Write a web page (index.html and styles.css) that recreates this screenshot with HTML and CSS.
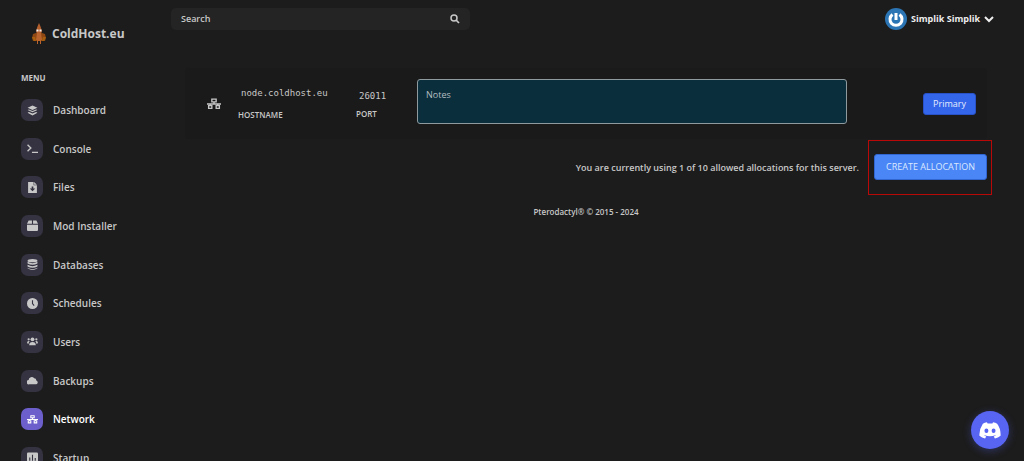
FILE: index.html
```html
<!DOCTYPE html>
<html lang="en">
<head>
<meta charset="utf-8">
<meta name="viewport" content="width=device-width, initial-scale=1">
<title>ColdHost.eu - Network</title>
<link rel="stylesheet" href="styles.css">
</head>
<body>
<svg class="sprite" aria-hidden="true">
  <symbol id="network" viewBox="0 0 26 22">
    <path d="M9 2h8v5H9zM3 14h6v5H3zM17 14h6v5h-6zM13 7v4M0 11h26M6 11v3M20 11v3" fill="none" stroke="currentColor" stroke-width="2.500"/>
  </symbol>
</svg>
<div class="app">
  <aside class="sidebar">
    <a class="brand" href="#">
      <svg class="mascot" viewBox="0 0 14 22" aria-hidden="true">
        <path d="M7 0 8.500 3.500 10 8 9 11H5L4 8l1.500-4.500z" fill="#b5602c"/>
        <path d="M4 10h6l3 1 1 4-1 3H1l-1-3 1-4z" fill="#8f4813"/>
        <path d="M5 10h4l1 7H9v4H8v-3H6v3H5v-4H4z" fill="#b9642f"/>
        <path d="M4.500 6.500h2v2h-2zM7.500 6.500h2v2h-2z" fill="#eee"/>
        <path d="M0 14l2 4h2l-1-4zM14 14l-2 4h-2l1-4z" fill="#a8600f"/>
      </svg>
      <span>ColdHost.eu</span>
    </a>
    <h2 class="menu-title">MENU</h2>
    <nav aria-label="Server">
      <ul class="menu">
        <li><a href="#"><span class="tile"><svg viewBox="0 0 20 20"><path d="M10 1l9 4-9 4-9-4z"/><path d="M1 9l2.500-1L10 11l6.500-3L19 9l-9 4z"/><path d="M1 14l2.500-1.500L10 15.500l6.500-3L19 14l-9 5z"/></svg></span>Dashboard</a></li>
        <li><a href="#"><span class="tile"><svg viewBox="0 0 20 20"><path d="M1 3l6 6-6 6M9 17h11" fill="none" stroke="currentColor" stroke-width="2.500"/></svg></span>Console</a></li>
        <li><a href="#"><span class="tile"><svg viewBox="0 0 20 20"><path fill-rule="evenodd" d="M2 0h10v6h6v14H2zM8.500 8v4H5l5 5 5-5h-3.500V8z"/><path d="M13 0l5 5h-5z"/></svg></span>Files</a></li>
        <li><a href="#"><span class="tile"><svg viewBox="0 0 20 20"><path d="M3 1h6v6H0zM11 1h6l3 6h-9zM0 8.500h20V18q0 2-2 2H2q-2 0-2-2z"/></svg></span>Mod Installer</a></li>
        <li><a href="#"><span class="tile"><svg viewBox="0 0 20 20"><ellipse cx="10" cy="3" rx="9" ry="3"/><path d="M1 5q9 5 18 0v3q-9 5-18 0zM1 10.500q9 5 18 0v3q-9 5-18 0zM1 16q9 5 18 0v1q-9 6-18 0z"/></svg></span>Databases</a></li>
        <li><a href="#"><span class="tile"><svg viewBox="0 0 20 20"><circle cx="10" cy="10" r="10"/><path class="cut" d="M10 4v6l3 4" fill="none" stroke-width="2"/></svg></span>Schedules</a></li>
        <li><a href="#"><span class="tile"><svg viewBox="0 0 20 20"><circle cx="10" cy="6" r="3.500"/><circle cx="3" cy="6" r="2"/><circle cx="17" cy="6" r="2"/><path d="M4 17q0-6 6-6t6 6zM0 13q0-4 3-4 2 0 2 1-2 1-2 4zM20 13q0-4-3-4-2 0-2 1 2 1 2 4z"/></svg></span>Users</a></li>
        <li><a href="#"><span class="tile"><svg viewBox="0 0 20 20"><path d="M4 17a4 4 0 0 1-1-8 5.500 5.500 0 0 1 10-3 4 4 0 0 1 4 4 3.600 3.600 0 0 1-1 7z"/></svg></span>Backups</a></li>
        <li><a class="active" href="#" aria-current="page"><span class="tile"><svg><use href="#network"/></svg></span>Network</a></li>
        <li><a href="#"><span class="tile"><svg viewBox="0 0 20 20"><path fill-rule="evenodd" d="M2 1h16q2 0 2 2v14q0 2-2 2H2q-2 0-2-2V3q0-2 2-2zM4 10v6h2v-6zM9 5v11h2V5zM14 11v5h2v-5z"/></svg></span>Startup</a></li>
      </ul>
    </nav>
  </aside>
  <div class="page">
    <header class="topbar">
      <form class="search" role="search">
        <input type="search" placeholder="Search" aria-label="Search">
        <button type="button" aria-label="Submit search"><svg viewBox="0 0 20 20"><circle cx="8" cy="8" r="6" fill="none" stroke="currentColor" stroke-width="3"/><path d="M12 12l6 6" stroke="currentColor" stroke-width="3.500"/></svg></button>
      </form>
      <button class="account" type="button">
        <svg class="avatar" viewBox="0 0 22 22" aria-hidden="true"><circle cx="11" cy="11" r="11" fill="#2c75b5"/><path d="M7.500 6.500a6 6 0 1 0 7 0" fill="none" stroke="#fff" stroke-width="3"/><path d="M11 5v7" stroke="#fff" stroke-width="3"/></svg>
        <span>Simplik Simplik</span>
        <svg class="chevron" viewBox="0 0 10 10" aria-hidden="true"><path d="M1 3l4 4 4-4" fill="none" stroke="currentColor" stroke-width="2"/></svg>
      </button>
    </header>
    <main class="content">
      <section class="allocation">
        <svg class="row-icon" aria-hidden="true"><use href="#network"/></svg>
        <div class="field host"><code>node.coldhost.eu</code><span>HOSTNAME</span></div>
        <div class="field port"><code>26011</code><span>PORT</span></div>
        <textarea class="notes" placeholder="Notes" aria-label="Notes"></textarea>
        <div class="actions"><button class="primary" type="button">Primary</button></div>
      </section>
      <div class="create-row">
        <p>You are currently using 1 of 10 allowed allocations for this server.</p>
        <div class="highlight"><button class="create" type="button">CREATE ALLOCATION</button></div>
      </div>
      <footer>Pterodactyl® © 2015 - 2024</footer>
    </main>
  </div>
</div>
<button class="discord" type="button" aria-label="Open Discord chat">
  <svg viewBox="0 0 24 19" aria-hidden="true"><path fill="#fff" fill-rule="evenodd" d="M20 2Q18 .8 15.400.3L14.700 1.800Q12 1.400 9.300 1.800L8.600.3Q6 .8 4 2-.3 8.500.2 15.300 3 17.700 6.500 18.500L7.800 16.300 5.500 15.200 6 14.800Q12 17.300 18 14.800l.5.4-2.300 1.100 1.300 2.200Q21 17.700 23.800 15.300 24.300 8 20 2zM8 12.300a2.200 2.500 0 1 1 0-5 2.200 2.500 0 0 1 0 5zM16 12.300a2.200 2.500 0 1 1 0-5 2.200 2.500 0 0 1 0 5z"/></svg>
</button>
</body>
</html>
```

FILE: styles.css
```css
* { box-sizing: border-box; }

body {
  margin: 0;
  background: #1c1c1c;
  color: #c8c8c8;
  font: 600 9px/14px "Open Sans", "Noto Sans", sans-serif;
}

button, input, textarea { font: inherit; color: inherit; }
button { cursor: pointer; border: 0; }
a { color: inherit; text-decoration: none; }
svg { display: block; fill: currentColor; }
.sprite { position: absolute; width: 0; height: 0; }

.app {
  display: grid;
  grid-template-columns: 171px 1fr;
  height: 100vh;
  overflow: hidden;
}

.sidebar { padding: 22px 0 0 21px; }

.brand {
  display: flex;
  align-items: center;
  gap: 6px;
  padding-left: 11px;
  font-size: 12px;
  font-weight: 700;
  line-height: 24px;
}
.mascot { width: 14px; height: 22px; }

.menu-title {
  margin: 25px 0 14px;
  font-size: 8px;
  font-weight: 700;
  line-height: 14px;
}

.menu {
  display: flex;
  flex-direction: column;
  justify-content: space-between;
  min-height: 370px;
  margin: 0;
  padding: 0;
  font-size: 10px;
  list-style: none;
}
.menu a { display: flex; align-items: center; gap: 10px; }
.menu .active { color: #fff; }
.tile {
  display: grid;
  place-items: center;
  width: 22px;
  height: 22px;
  border-radius: 7px;
  background: #353241;
}
.active .tile { background: #6c5fcb; }
.tile svg { width: 11px; height: 11px; }
.cut { stroke: #353241; }

.topbar {
  display: flex;
  justify-content: space-between;
  align-items: center;
  padding: 8px 30px 0 0;
}
.search {
  display: flex;
  align-items: center;
  width: 299px;
  height: 22px;
  padding: 0 10px;
  border-radius: 5px;
  background: #242424;
}
.search input {
  flex: 1;
  min-width: 0;
  padding: 0;
  border: 0;
  outline: 0;
  background: none;
}
.search input::placeholder { color: #c8c8c8; opacity: 1; }
.search button { padding: 0; background: none; }
.search svg { width: 10px; height: 10px; }

.account {
  display: flex;
  align-items: center;
  gap: 4px;
  padding: 0;
  background: none;
  color: #eee;
  font-weight: 700;
}
.avatar { width: 22px; height: 22px; }
.chevron { width: 10px; height: 10px; }

.content { padding: 38px 37px 0 14px; }

.allocation {
  display: flex;
  align-items: center;
  min-height: 71px;
  padding: 0 11px 0 22px;
  border-radius: 4px;
  background: #1a1a1a;
}
.row-icon { width: 14px; height: 12px; }
.field { display: flex; flex-direction: column; font-size: 8px; }
.field code {
  padding-left: 3px;
  font: 9px/14px "DejaVu Sans Mono", monospace;
}
.host { gap: 8px; width: 118px; margin-left: 17px; }
.port { gap: 4px; width: 61px; padding-top: 3px; }
.notes {
  flex: 1;
  min-width: 0;
  height: 45px;
  margin-bottom: 5px;
  padding: 8px;
  border: 1px solid #8f9a9e;
  border-radius: 3px;
  outline: 0;
  resize: none;
  background: #0b2e3c;
  font-weight: 400;
}
.notes::placeholder { color: #b5bec2; opacity: 1; }
.actions { display: flex; justify-content: flex-end; width: 129px; }
.primary {
  padding: 3px 9px;
  border: 1px solid #2952c8;
  border-radius: 3px;
  background: #3366ea;
  color: #e6edff;
  font-weight: 400;
}

.create-row {
  display: flex;
  justify-content: flex-end;
  align-items: center;
  gap: 9px;
  margin: 1px -5px 0 0;
}
.create-row p { margin: 0; }
.highlight { padding: 13px 4px 14px 5px; border: 1px solid #b90808; }
.create {
  display: block;
  padding: 5px 11px;
  border: 1px solid #3166d0;
  border-radius: 3px;
  background: #4a86f5;
  color: #dce8ff;
  font-weight: 400;
}

footer {
  margin-top: 10px;
  font-size: 8px;
  line-height: 14px;
  text-align: center;
}

.discord {
  position: fixed;
  right: 15px;
  bottom: 12px;
  display: grid;
  place-items: center;
  width: 38px;
  height: 38px;
  padding: 0;
  border-radius: 50%;
  background: #5865f2;
  box-shadow: 0 2px 8px #5865f255;
}
.discord svg { width: 22px; height: 17px; }
```
